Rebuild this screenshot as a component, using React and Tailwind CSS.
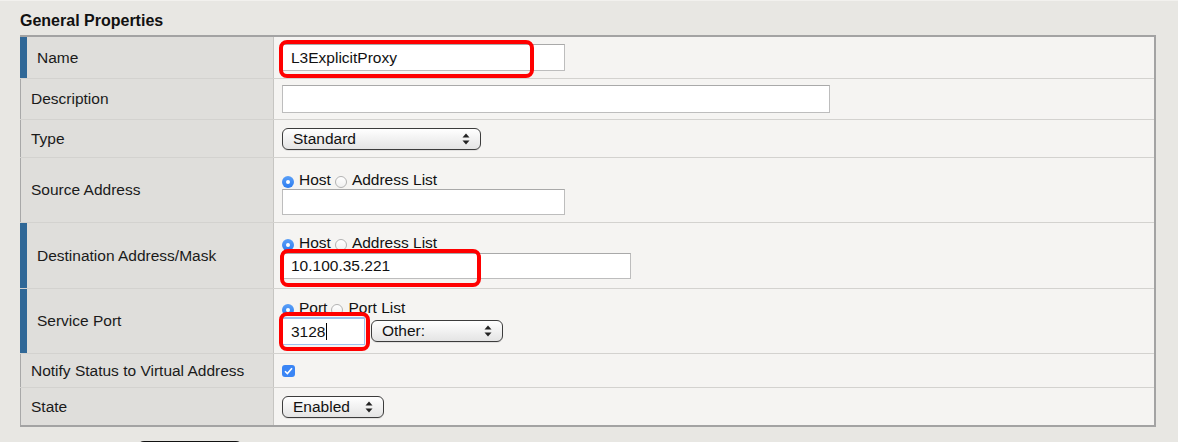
import React from 'react';

const FONT = { fontFamily: '"Liberation Sans", Arial, Helvetica, sans-serif' };

// small up/down arrow pair used by the mac-style selects
const Arrows = () => (
  <svg width="8" height="12" viewBox="0 0 8 12" className="shrink-0">
    <path d="M4 0.5 L7.5 4.5 L0.5 4.5 Z" fill="#222" />
    <path d="M4 11.5 L7.5 7.5 L0.5 7.5 Z" fill="#222" />
  </svg>
);

const Select = ({ value, width }) => (
  <div
    className="h-[22px] flex items-center justify-between pl-[10px] pr-[10px] rounded-[6px] border border-[#3c3c3c] bg-linear-to-b from-white to-[#e4e4e4] text-[15.5px] text-[#111] shadow-[0_1px_0_rgba(0,0,0,0.08)]"
    style={{ width }}
  >
    <span>{value}</span>
    <Arrows />
  </div>
);

const Radio = ({ checked }) =>
  checked ? (
    <span className="relative top-[2px] w-[12px] h-[12px] rounded-full bg-linear-to-b from-[#5a9ff7] to-[#2b7cf0] flex items-center justify-center shrink-0">
      <span className="w-[4px] h-[4px] rounded-full bg-white" />
    </span>
  ) : (
    <span className="relative top-[2px] block w-[12px] h-[12px] rounded-full bg-linear-to-b from-white to-[#f0f0f0] border border-[#b3b3b3] shrink-0" />
  );

const RadioPair = ({ a, b }) => (
  <div className="h-[18px] flex items-center text-[15.5px] text-[#111] leading-none">
    <Radio checked />
    <span className="ml-[5px]">{a}</span>
    <span className="ml-[4px]"><Radio /></span>
    <span className="ml-[5px]">{b}</span>
  </div>
);

const TextInput = ({ value, width, height = 27, focused, cursor }) => (
  <div
    className={`bg-white border flex items-center pl-[8px] text-[15.5px] text-[#111] ${
      focused ? 'border-[#9ec2ef] border-t-2' : 'border-[#bdbdbd] border-t-[#a9a9a9]'
    }`}
    style={{ width, height }}
  >
    <span>{value}</span>
    {cursor && <span className="ml-[1px] w-px h-[17px] bg-black" />}
  </div>
);

// red annotation box drawn over an input
const Mark = ({ left, top, width, height }) => (
  <span
    className="absolute border-[4px] border-[#ff0000] rounded-[8px] pointer-events-none"
    style={{ left, top, width, height }}
  />
);

const Row = ({ label, marked, height, last, children, valueClass = 'items-center' }) => (
  <div
    className={`flex ${last ? '' : 'border-b border-[#d3d2cf]'}`}
    style={{ height }}
  >
    <div
      className={`w-[254px] shrink-0 flex items-center pl-[10px] bg-[#dfdedb] border-r border-[#c6c5c2] text-[15.5px] text-[#1a1a1a] ${
        marked ? 'border-l-[7px] border-l-[#306897]' : 'border-l border-l-[#a8a8a8]'
      }`}
    >
      {label}
    </div>
    <div className={`flex-1 flex pl-[8px] bg-[#f5f4f2] ${valueClass}`}>{children}</div>
  </div>
);

export default function App() {
  return (
    <div className="w-[1178px] h-[442px] overflow-hidden bg-[#e8e7e3] border-t border-[#f2f1ee]" style={FONT}>
      <div className="pl-[20px] pt-[11px] h-[34px] text-[16px] font-bold text-[#111] leading-[18px]">
        General Properties
      </div>

      <div className="ml-[20px] w-[1136px] border-t-2 border-r-2 border-b-2 border-[#a3a3a3]">
        <Row label="Name" marked height={42}>
          <div className="relative">
            <TextInput value="L3ExplicitProxy" width={283} />
            <Mark left={-3} top={-4} width={255} height={38} />
          </div>
        </Row>

        <Row label="Description" height={41}>
          <TextInput value="" width={548} height={28} />
        </Row>

        <Row label="Type" height={38}>
          <Select value="Standard" width={199} />
        </Row>

        <Row label="Source Address" height={65} valueClass="flex-col pt-[13px]">
          <RadioPair a="Host" b="Address List" />
          <TextInput value="" width={283} height={26} />
        </Row>

        <Row label="Destination Address/Mask" marked height={66} valueClass="flex-col pt-[11px]">
          <RadioPair a="Host" b="Address List" />
          <div className="relative mt-[1px]">
            <TextInput value="10.100.35.221" width={349} height={26} />
            <Mark left={-2} top={-4} width={201} height={38} />
          </div>
        </Row>

        <Row label="Service Port" marked height={65} valueClass="flex-col pt-[10px]">
          <RadioPair a="Port" b="Port List" />
          <div className="flex items-center gap-[6px]">
            <div className="relative">
              <TextInput value="3128" width={83} height={28} focused cursor />
              <Mark left={-3} top={-5} width={91} height={39} />
            </div>
            <Select value="Other:" width={132} />
          </div>
        </Row>

        <Row label="Notify Status to Virtual Address" height={34}>
          <span className="w-[13px] h-[12px] rounded-[3px] bg-[#3a85f5] flex items-center justify-center">
            <svg width="9" height="8" viewBox="0 0 9 8">
              <path d="M1 4.2 L3.4 6.6 L8 1.2" fill="none" stroke="white" strokeWidth="1.6" />
            </svg>
          </span>
        </Row>

        <Row label="State" height={37} last>
          <Select value="Enabled" width={102} />
        </Row>
      </div>

      <div className="mt-[14px] ml-[137px] w-[106px] h-[24px] rounded-[7px] border-2 border-[#111] bg-[#f2f2f2]" />
    </div>
  );
}
